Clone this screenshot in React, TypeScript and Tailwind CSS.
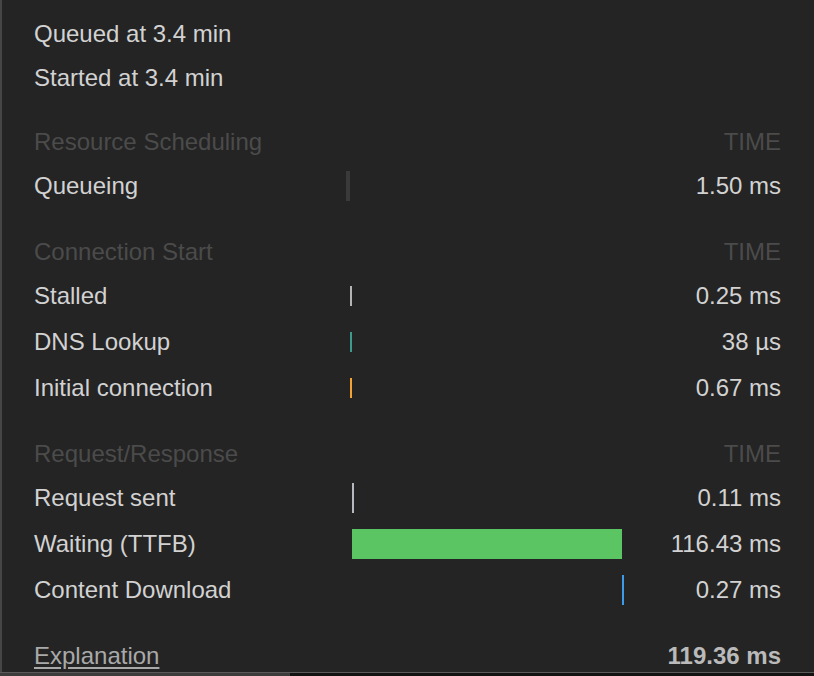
const sections = [
  {
    title: "Resource Scheduling",
    gap: "mt-[21px]",
    rows: [
      { label: "Queueing", time: "1.50 ms", bar: "ml-0 w-[4px] h-[30px] bg-[#3a3a3a]" },
    ],
  },
  {
    title: "Connection Start",
    gap: "mt-[22px]",
    rows: [
      { label: "Stalled", time: "0.25 ms", bar: "ml-[4px] w-[2px] h-[20px] bg-[#b4b4b4]" },
      { label: "DNS Lookup", time: "38 µs", bar: "ml-[4px] w-[2px] h-[20px] bg-[#3e9b8b]" },
      { label: "Initial connection", time: "0.67 ms", bar: "ml-[4px] w-[2px] h-[20px] bg-[#f4a236]" },
    ],
  },
  {
    title: "Request/Response",
    gap: "mt-[22px]",
    rows: [
      { label: "Request sent", time: "0.11 ms", bar: "ml-[6px] w-[2px] h-[30px] bg-[#b6babe]" },
      { label: "Waiting (TTFB)", time: "116.43 ms", bar: "ml-[6px] w-[270px] h-[30px] bg-[#5ac562]" },
      { label: "Content Download", time: "0.27 ms", bar: "ml-[276px] w-[2px] h-[30px] bg-[#3d9cea]" },
    ],
  },
];

export default function App() {
  return (
    <div
      className="w-[814px] h-[676px] flex flex-col bg-[#111] text-[24px] overflow-hidden"
      style={{ fontFamily: '"Liberation Sans", Arial, sans-serif' }}
    >
      <div className="flex-1 min-h-0 overflow-hidden bg-[#242424] border-l-2 border-[#464646] pl-[32px] pr-[33px] pt-[12px] text-[#d2d2d2]">
        <div className="h-[44px] flex items-center">Queued at 3.4 min</div>
        <div className="h-[44px] flex items-center">Started at 3.4 min</div>

        {sections.map((section) => (
          <div key={section.title} className={section.gap}>
            <div className="h-[42px] flex items-center justify-between text-[#4b4b4b]">
              <span>{section.title}</span>
              <span>TIME</span>
            </div>
            {section.rows.map((row) => (
              <div key={row.label} className="h-[46px] flex items-center">
                <div className="w-[312px] shrink-0">{row.label}</div>
                <div className="flex-1 flex items-center">
                  <div className={row.bar} />
                </div>
                <div className="w-[135px] shrink-0 text-right">{row.time}</div>
              </div>
            ))}
          </div>
        ))}

        <div className="mt-[20px] h-[46px] flex items-center justify-between">
          <a href="#" className="text-[#a9a9a9] underline underline-offset-[3px]">
            Explanation
          </a>
          <span className="font-bold text-[#bababa]">119.36 ms</span>
        </div>
      </div>
      <div className="h-px bg-[#5a5a5a]" />
      <div className="h-[3px] flex">
        <div className="w-[290px] bg-[#3c3c3c]" />
        <div className="flex-1 bg-[#121212]" />
      </div>
    </div>
  );
}
